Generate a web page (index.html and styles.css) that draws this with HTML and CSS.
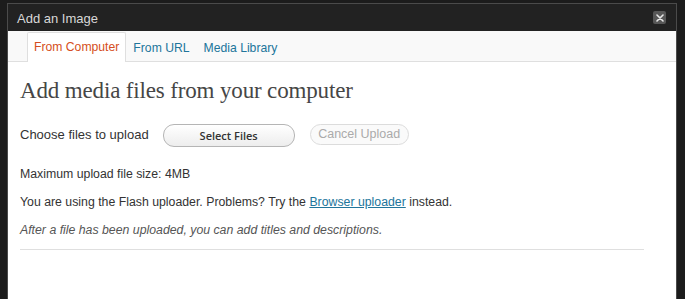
FILE: index.html
```html
<!DOCTYPE html>
<html lang="en">
<head>
    <meta charset="UTF-8">
    <title>Add an Image</title>
    <link rel="stylesheet" href="styles.css">
</head>
<body>

<div class="backdrop">
    <div class="dialog">
        <div class="titlebar">
            <span class="title">Add an Image</span>
            <span class="close">
                <svg width="8" height="8" viewBox="0 0 8 8">
                    <path d="M1 1 L7 7 M7 1 L1 7" stroke="#e8e8e8" stroke-width="1.6" stroke-linecap="round"/>
                </svg>
            </span>
        </div>
        <div class="tabs">
            <a class="tab tab-current">From Computer</a>
            <a class="tab">From URL</a>
            <a class="tab">Media Library</a>
        </div>
        <div class="content">
            <h3 class="heading">Add media files from your computer</h3>
            <div class="upload-row">
                <span>Choose files to upload</span>
                <button class="btn btn-select">Select Files</button>
                <button class="btn btn-cancel" disabled>Cancel Upload</button>
            </div>
            <p class="note">Maximum upload file size: 4MB</p>
            <p class="note">You are using the Flash uploader. Problems? Try the <a href="#">Browser uploader</a> instead.</p>
            <p class="note note-italic">After a file has been uploaded, you can add titles and descriptions.</p>
            <hr class="divider">
        </div>
    </div>
</div>

</body>
</html>
```

FILE: styles.css
```css
body {
    margin: 0px;
    padding: 0px;
    background-color: #1c1c1c;
    font-family: "Liberation Sans", Arial, sans-serif;
}
.backdrop {
    height: 299px;
    overflow: hidden;
    padding: 3px 0 0 7px;
    box-sizing: border-box;
}
.dialog {
    width: 670px;
    height: 320px;
    background-color: white;
    border: 1px solid #4b4b4b;
    border-bottom: none;
    box-sizing: border-box;
}
.titlebar {
    height: 27px;
    background-color: #222;
    display: flex;
    align-items: center;
    justify-content: space-between;
    padding: 0 10px 0 9px;
}
.title {
    color: #d8d8d8;
    font-size: 13px;
    padding-top: 1px;
}
.close {
    width: 13px;
    height: 13px;
    background-color: #575757;
    border-radius: 2px;
    display: flex;
    align-items: center;
    justify-content: center;
}
.tabs {
    height: 30px;
    background-color: #f9f9f9;
    border-bottom: 1px solid #dfdfdf;
    display: flex;
    align-items: flex-end;
    padding-left: 19px;
}
.tab {
    font-size: 12.2px;
    color: #21759b;
    padding: 0 6px;
    height: 28px;
    line-height: 28px;
    border: 1px solid transparent;
    border-bottom: none;
    margin-bottom: -1px;
    border-radius: 2px 2px 0 0;
}
.tab-current {
    color: #d54e21;
    background-color: white;
    border-color: #dfdfdf;
    height: 29px;
}
.content {
    padding: 0 32px 0 12px;
}
.heading {
    font-family: "Liberation Serif", Georgia, serif;
    font-weight: normal;
    font-size: 23px;
    letter-spacing: -0.15px;
    color: #464646;
    margin: 14px 0 0 0;
    line-height: 30px;
}
.upload-row {
    display: flex;
    align-items: center;
    font-size: 13px;
    color: #333;
    margin-top: 17px;
    height: 22px;
}
.btn {
    border-radius: 11px;
    font-family: "Liberation Sans", Arial, sans-serif;
}
.btn-select {
    margin-left: 14px;
    width: 132px;
    height: 23px;
    border: 1px solid #b5b5b5;
    background: linear-gradient(#ffffff, #ededed);
    font-family: "Open Sans", sans-serif;
    font-size: 11px;
    font-weight: 600;
    color: #333;
    margin-top: 3px;
}
.btn-cancel {
    margin-left: 15px;
    width: 99px;
    height: 21px;
    border: 1px solid #dcdcdc;
    background: #fafafa;
    font-size: 12.5px;
    color: #aaa;
    padding: 0;
}
.note {
    font-size: 12.3px;
    color: #333;
    margin: 0;
    line-height: 28px;
}
.upload-row + .note {
    margin-top: 15px;
}
.note a {
    color: #21759b;
}
.note-italic {
    font-style: italic;
    color: #555;
}
.divider {
    border: none;
    border-top: 1px solid #dfdfdf;
    margin: 5px 0 0 0;
}
```
